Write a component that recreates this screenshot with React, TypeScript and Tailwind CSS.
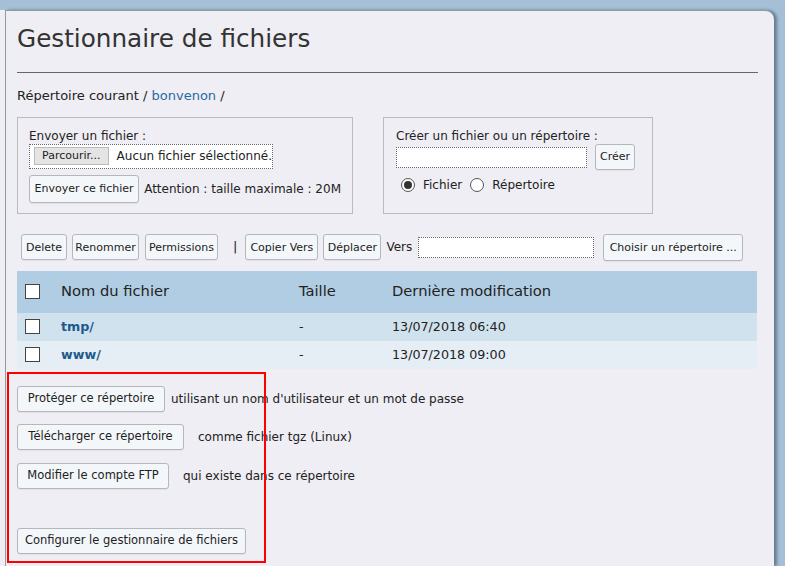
import React from 'react';

const btn =
  'inline-flex items-center justify-center whitespace-nowrap rounded-[3px] border border-[#b4b8bd] bg-[#f4f7fa] text-[11.5px] text-[#222] leading-none shadow-[0_1px_0_rgba(0,0,0,0.05)]';

const tool =
  'inline-flex h-[26px] items-center justify-center whitespace-nowrap rounded-[3px] border border-[#b4b8bd] bg-[#f4f7fa] text-[11px] text-[#222] leading-none shadow-[0_1px_0_rgba(0,0,0,0.05)]';

function Radio({ checked }: { checked?: boolean }) {
  return (
    <span className="inline-flex h-[14px] w-[14px] items-center justify-center rounded-full border border-[#555] bg-white">
      {checked && <span className="h-[8px] w-[8px] rounded-full bg-[#333]" />}
    </span>
  );
}

function Box() {
  return <span className="inline-block h-[15px] w-[15px] border border-[#444] bg-white" />;
}

const rows = [
  { name: 'tmp/', date: '13/07/2018 06:40', bg: 'bg-[#d1e2ef]' },
  { name: 'www/', date: '13/07/2018 09:00', bg: 'bg-[#e5edf5]' },
];

export default function App() {
  return (
    <div className="h-[566px] w-[785px] overflow-hidden bg-[#a5bfd6] pt-[10px] font-['DejaVu_Sans',Verdana,sans-serif] text-[#222]">
      <div className="flex h-full">
        <div className="w-[5px] bg-[#efeef3]" />
        <div className="relative h-full w-[769px] rounded-tr-[9px] border-l border-t border-[#8e9aa6] bg-[#efeef4] pl-[11px] pr-[16px] shadow-[3px_0_3px_rgba(60,80,100,0.6)]">
          <h1 className="pt-[10px] text-[24.7px] leading-[36px] text-[#333]">Gestionnaire de fichiers</h1>
          <div className="mt-[15px] h-px bg-[#666]" />
          <div className="mt-[13px] text-[13px]">
            Répertoire courant / <span className="text-[#2a6aa0]">bonvenon</span> /
          </div>

          <div className="mt-[11px] flex gap-[30px] text-[12px]">
            <div className="h-[97px] w-[336px] border border-[#bbb] px-[11px] pt-[10px]">
              <div className="leading-[16px]">Envoyer un fichier :</div>
              <div className="inline-flex h-[25px] w-[244px] items-center gap-[8px] whitespace-nowrap border border-dotted border-[#666] bg-white pl-[4px]">
                <span className="inline-flex h-[18px] w-[76px] items-center justify-center border border-[#bbb] bg-[#e4e4e4] text-[11px]">
                  Parcourir...
                </span>
                <span>Aucun fichier sélectionné.</span>
              </div>
              <div className="mt-[6px] flex items-center gap-[5px] whitespace-nowrap">
                <button className={tool + ' h-[28px] w-[112px]'}>Envoyer ce fichier</button>
                <span>Attention : taille maximale : 20M</span>
              </div>
            </div>

            <div className="h-[97px] w-[270px] border border-[#bbb] px-[12px] pt-[10px]">
              <div className="leading-[16px]">Créer un fichier ou un répertoire :</div>
              <div className="flex items-center gap-[8px]">
                <div className="mt-[1px] h-[21px] w-[191px] border border-dotted border-[#666] bg-white" />
                <button className={tool + ' w-[40px]'}>Créer</button>
              </div>
              <div className="mt-[6px] flex items-center pl-[5px]">
                <Radio checked />
                <span className="ml-[8px]">Fichier</span>
                <span className="ml-[8px] flex">
                  <Radio />
                </span>
                <span className="ml-[8px]">Répertoire</span>
              </div>
            </div>
          </div>

          <div className="mt-[20px] flex h-[27px] items-center pl-[4px] text-[12px]">
            <button className={tool + ' w-[46px]'}>Delete</button>
            <button className={tool + ' ml-[5px] w-[67px]'}>Renommer</button>
            <button className={tool + ' ml-[6px] w-[73px]'}>Permissions</button>
            <span className="ml-[15px] text-[13px]">|</span>
            <button className={tool + ' ml-[8px] w-[73px]'}>Copier Vers</button>
            <button className={tool + ' ml-[5px] w-[58px]'}>Déplacer</button>
            <span className="ml-[5px]">Vers</span>
            <div className="ml-[6px] h-[21px] w-[176px] border border-dotted border-[#666] bg-white" />
            <button className={tool + ' ml-[9px] h-[27px] w-[140px]'}>Choisir un répertoire ...</button>
          </div>

          <table className="mt-[10px] w-[740px] border-collapse text-left">
            <thead>
              <tr className="h-[42px] bg-[#b1cde3] text-[14.7px]">
                <th className="w-[44px] pl-[8px] font-normal"><span className="flex"><Box /></span></th>
                <th className="w-[238px] font-normal">Nom du fichier</th>
                <th className="w-[93px] font-normal">Taille</th>
                <th className="font-normal">Dernière modification</th>
              </tr>
            </thead>
            <tbody className="text-[12.7px]">
              {rows.map((r) => (
                <tr key={r.name} className={'h-[28px] ' + r.bg}>
                  <td className="pl-[8px]"><span className="flex"><Box /></span></td>
                  <td className="font-bold text-[#1f5a8c]">{r.name}</td>
                  <td>-</td>
                  <td>{r.date}</td>
                </tr>
              ))}
            </tbody>
          </table>

          <div className="mt-[17px] flex flex-col text-[12px]">
            <div className="flex items-center">
              <button className={btn + ' h-[26px] w-[148px]'}>Protéger ce répertoire</button>
              <span className="ml-[6px]">utilisant un nom d'utilisateur et un mot de passe</span>
            </div>
            <div className="mt-[12px] flex items-center">
              <button className={btn + ' h-[26px] w-[167px]'}>Télécharger ce répertoire</button>
              <span className="ml-[14px]">comme fichier tgz (Linux)</span>
            </div>
            <div className="mt-[13px] flex items-center">
              <button className={btn + ' h-[26px] w-[152px]'}>Modifier le compte FTP</button>
              <span className="ml-[14px]">qui existe dans ce répertoire</span>
            </div>
            <div className="mt-[39px]">
              <button className={btn + ' h-[26px] w-[229px]'}>Configurer le gestionnaire de fichiers</button>
            </div>
          </div>

          <div className="pointer-events-none absolute left-[1px] top-[361px] h-[191px] w-[259px] border-2 border-[#ff0000]" />
        </div>
      </div>
    </div>
  );
}
